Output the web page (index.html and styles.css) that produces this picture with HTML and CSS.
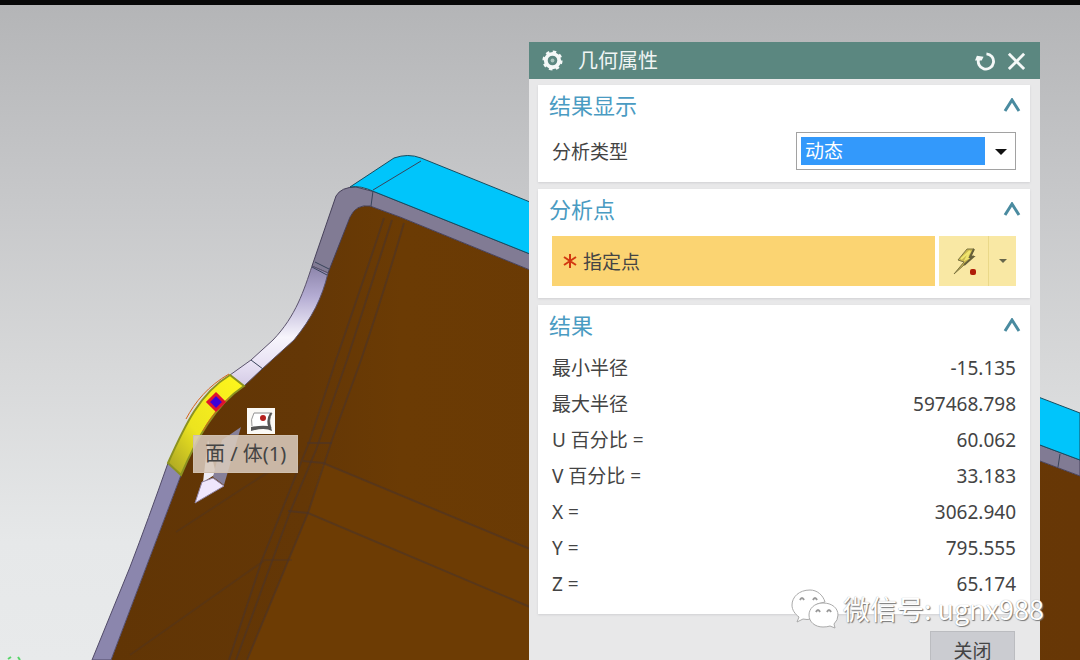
FILE: index.html
```html
<!DOCTYPE html>
<html lang="zh-CN">

<head>
    <meta charset="UTF-8">
    <meta name="viewport" content="width=device-width, initial-scale=1.0">
    <title>几何属性</title>
    <link rel="stylesheet" href="styles.css">
</head>

<body>
    <main class="workspace">
        <!-- Part model -->
        <svg class="model" viewBox="0 0 1080 660" preserveAspectRatio="xMidYMid slice" aria-hidden="true">
            <defs>
                <linearGradient id="brown" x1="0" y1="0" x2="1" y2="0">
                    <stop offset="0" stop-color="#613505" />
                    <stop offset="0.2" stop-color="#643706" />
                    <stop offset="0.3" stop-color="#6b3b04" />
                    <stop offset="1" stop-color="#673706" />
                </linearGradient>
                <linearGradient id="rim" gradientUnits="userSpaceOnUse" x1="0" y1="266" x2="0" y2="385">
                    <stop offset="0" stop-color="#8c84aa" />
                    <stop offset="0.25" stop-color="#b3abd2" />
                    <stop offset="0.6" stop-color="#f7f5fc" />
                    <stop offset="0.8" stop-color="#eae4f5" />
                    <stop offset="1" stop-color="#d5cce6" />
                </linearGradient>
                <linearGradient id="yellow" x1="1" y1="0" x2="0" y2="1">
                    <stop offset="0" stop-color="#fff71c" />
                    <stop offset="0.6" stop-color="#ece41f" />
                    <stop offset="1" stop-color="#a6a025" />
                </linearGradient>
            </defs>
            <path fill="url(#brown)" d="M111 660L181 475C196 440 212 408 242 385L262 369L290 340C308 318 318 298 324 276L350 217Q356 204 370 206L400 217L530 270L1080 476V660Z" />
            <path fill="#6d3c04" d="M323 463L530 549L540 660H247L308 513Z" />
            <g class="seams">
                <path d="M384 218Q362 285 336 360L310 440L262 560L229 660" />
                <path d="M404 223Q383 295 361 360L332 440L308 513L247 660" />
                <path d="M392 220Q370 288 347 360L316 450L290 512L236 660" />
                <path d="M307 443H332M303 461L323 463L530 549M288 511L308 513L530 607" />
                <path class="faint" d="M176 532L245 487L300 452M130 655L265 560H292" />
            </g>
            <path fill="#817b94" stroke="#47415a" d="M312 266L336 196Q341 187 356 187L375 192L530 254L1080 460V476L530 270L400 217L370 206Q356 204 350 217L328 273Z" />
            <path fill="#00c5fb" stroke="#164d60" d="M350 187L394 158Q408 153 421 158L530 202L1080 413V460L530 254L375 192Q360 185 350 187Z" />
            <path class="edge" d="M373 190L421 161M373 191L371 206M1060 454L1058 467" />
            <path fill="url(#rim)" stroke="#5b536c" d="M312 266C304 290 296 316 273 340L251 360L230 375L244 386L262 369L294 340C312 318 322 298 328 273Z" />
            <path class="edge" d="M251 360L263 369M315 262L329 269M312 267L327 275" />
            <path fill="#8b86ad" stroke="#514a68" d="M168 463Q148 520 130 567L92 660H111L181 475Z" />
            <path fill="url(#yellow)" stroke="#8c9221" stroke-width="2" d="M230 375C200 393 185 425 168 463L181 475C196 440 215 405 244 386Z" />
            <path fill="none" stroke="#d46519" d="M229 374C208 386 195 402 186 419M229 398C217 409 210 418 203 431" />
            <path fill="#3c00d8" stroke="#e0122e" stroke-width="3" d="M216 394L224 402L216 410L208 402Z" />
            <path fill="#eeecf5" d="M203 482L208 440L216 474L208 479Z" />
            <path fill="#868099" d="M241 427L222 440L213 477L224 485Z" />
            <path fill="#efe6fc" stroke="#9185a5" d="M195 503L202 482L213 478L224 486Z" />
            <path fill="none" stroke="#56d568" stroke-width="2" d="M8 659L11 657M18 657L20 660" />
        </svg>

        <svg class="pick-icon" viewBox="0 0 28 26" aria-hidden="true">
            <rect width="28" height="26" fill="#fbf9f5" />
            <path d="M7 5H25Q21 12 24 20H5" fill="#fff" stroke="#8c8c8c" />
            <path d="M25 5Q21 12 24 19L25 23Q18 19 4 23V19Q14 17 21 18Q19 11 23 5Z" fill="#555" />
            <path d="M7 5Q3 12 5 18" fill="none" stroke="#999" />
            <circle cx="16" cy="10" r="3" fill="#b5201d" />
        </svg>
        <div class="tooltip">面 / 体(1)</div>

        <!-- Geometry properties dialog -->
        <form class="dialog">
            <header class="title-bar">
                <svg class="gear" viewBox="0 0 24 24" aria-hidden="true">
                    <circle cx="12" cy="12" r="7" fill="none" stroke="#f4f8f7" stroke-width="4" />
                    <circle cx="12" cy="12" r="9" fill="none" stroke="#f4f8f7" stroke-width="3" stroke-dasharray="3.5 3.57" />
                    <circle cx="12" cy="12" r="2" fill="#a9c4bd" />
                </svg>
                <h1>几何属性</h1>
                <button type="button" class="icon-button" aria-label="重置">
                    <svg viewBox="0 0 22 22" aria-hidden="true">
                        <path d="M12 4A8 8 0 1 1 4 9" fill="none" stroke="#f4f8f7" stroke-width="3" />
                        <path d="M0 11L2 6L9 7L7 11Z" fill="#f4f8f7" />
                    </svg>
                </button>
                <button type="button" class="icon-button" aria-label="取消">
                    <svg viewBox="0 0 22 22" aria-hidden="true">
                        <path d="M3 4L19 20M19 4L3 20" stroke="#f4f8f7" stroke-width="3" />
                    </svg>
                </button>
            </header>

            <section class="group">
                <div class="group-header">
                    <h2>结果显示</h2>
                    <button type="button" class="collapse" aria-label="折叠结果显示">
                        <svg viewBox="0 0 18 14" aria-hidden="true"><path d="M2 13L9 2L16 13" /></svg>
                    </button>
                </div>
                <div class="field">
                    <label for="analysis-type">分析类型</label>
                    <div class="select-box">
                        <select id="analysis-type">
                            <option>动态</option>
                        </select>
                    </div>
                </div>
            </section>

            <section class="group">
                <div class="group-header">
                    <h2>分析点</h2>
                    <button type="button" class="collapse" aria-label="折叠分析点">
                        <svg viewBox="0 0 18 14" aria-hidden="true"><path d="M2 13L9 2L16 13" /></svg>
                    </button>
                </div>
                <div class="point-row">
                    <button type="button" class="specify">
                        <svg class="required" viewBox="0 0 14 14" aria-hidden="true">
                            <path d="M7 0V14M1 3L13 11M13 3L1 11" />
                        </svg>
                        指定点
                    </button>
                    <button type="button" class="point-tool" aria-label="点构造器">
                        <svg viewBox="0 0 28 32" aria-hidden="true">
                            <path d="M17 4H24L21 11H24L14 20L4 29L14 17L8 15Z" fill="#c9b84f" stroke="#7d7442" />
                            <path d="M11 14L20 6L16 14L20 12" fill="none" stroke="#f1e56e" stroke-width="2" />
                            <path d="M24 4L20 12L23 12L14 20" fill="none" stroke="#66603a" stroke-width="2" />
                            <rect x="20" y="24" width="6" height="6" rx="2" fill="#b01d08" />
                        </svg>
                    </button>
                    <button type="button" class="point-menu" aria-label="更多点选项"></button>
                </div>
            </section>

            <section class="group">
                <div class="group-header">
                    <h2>结果</h2>
                    <button type="button" class="collapse" aria-label="折叠结果">
                        <svg viewBox="0 0 18 14" aria-hidden="true"><path d="M2 13L9 2L16 13" /></svg>
                    </button>
                </div>
                <table class="results">
                    <tr><th scope="row">最小半径</th><td>-15.135</td></tr>
                    <tr><th scope="row">最大半径</th><td>597468.798</td></tr>
                    <tr><th scope="row">U 百分比 =</th><td>60.062</td></tr>
                    <tr><th scope="row">V 百分比 =</th><td>33.183</td></tr>
                    <tr><th scope="row">X =</th><td>3062.940</td></tr>
                    <tr><th scope="row">Y =</th><td>795.555</td></tr>
                    <tr><th scope="row">Z =</th><td>65.174</td></tr>
                </table>
            </section>

            <footer class="actions">
                <button type="button" class="close-button">关闭</button>
            </footer>
        </form>

        <div class="watermark">
            <svg viewBox="0 0 48 42" aria-hidden="true">
                <path d="M19 2C8 2 1 9 1 17C1 22 4 26 8 29L6 34L12 31Q16 32 20 31Q17 16 34 14C32 7 26 2 19 2Z" />
                <path d="M32 15C23 15 18 21 18 27C18 34 24 39 32 39Q36 39 39 38L44 40L43 36Q47 32 47 27C47 20 41 15 32 15Z" />
                <path class="eyes" d="M9 12Q11 8 13 12M22 12Q24 8 26 12M25 24Q27 20 29 24M36 24Q38 20 40 24" />
            </svg>
            <span>微信号: ugnx988</span>
        </div>
    </main>
</body>

</html>
```
FILE: styles.css
```css
/* General styles */
* {
    box-sizing: border-box;
}

body {
    font-family: "Noto Sans", "Noto Sans CJK SC", sans-serif;
    font-size: 19px;
    margin: 0;
    color: #444;
}

button,
select {
    font: inherit;
    color: inherit;
    border: none;
    padding: 0;
    cursor: pointer;
}

svg {
    display: block;
}

.workspace {
    position: relative;
    height: 100vh;
    overflow: hidden;
    border-top: 5px solid #080808;
    background: linear-gradient(#b4b5b7, #c7c8ca 30%, #d7d8d9 55%, #e6e8e9 82%, #e8eaeb);
}

/* Model */
.model {
    position: absolute;
    left: 0;
    bottom: 0;
    width: 100%;
    height: 100vh;
}

.seams path {
    fill: none;
    stroke: #4b3428;
    stroke-width: 2;
    stroke-opacity: 0.6;
}

.seams .faint {
    stroke-opacity: 0.35;
}

.edge {
    fill: none;
    stroke: #38445a;
}

.pick-icon {
    position: absolute;
    left: 247px;
    top: 403px;
    width: 28px;
    height: 26px;
}

.tooltip {
    position: absolute;
    left: 193px;
    top: 430px;
    padding: 0 11px;
    font-size: 20px;
    line-height: 36px;
    border: 1px solid #cfbfae;
    background: rgba(216, 202, 188, 0.88);
    white-space: nowrap;
}

/* Dialog */
.dialog {
    position: absolute;
    top: 37px;
    right: 40px;
    width: 511px;
    padding: 0 10px 12px 9px;
    background: #e8e8e9;
}

.title-bar {
    display: flex;
    align-items: center;
    gap: 10px;
    height: 37px;
    margin: 0 -10px 6px -9px;
    padding: 0 13px 0 12px;
    background: #5b8780;
    color: #f0f5f4;
}

.title-bar h1 {
    flex: 1;
    margin: 0 0 0 4px;
    font-size: 20px;
    line-height: 36px;
    font-weight: 400;
}

.gear {
    width: 23px;
    height: 23px;
}

.icon-button {
    background: none;
}

.icon-button svg {
    width: 21px;
    height: 21px;
}

.group {
    margin-bottom: 7px;
    padding: 0 14px 12px;
    background: #fff;
    box-shadow: 0 1px 2px #d0d0d4;
}

.group-header {
    display: flex;
    align-items: center;
    justify-content: space-between;
    height: 40px;
    margin: 0 -5px 7px -3px;
}

.group-header h2 {
    margin: 0;
    font-size: 22px;
    line-height: 40px;
    font-weight: 400;
    color: #4a9bc2;
}

.collapse {
    background: none;
}

.collapse svg {
    width: 18px;
    height: 14px;
    fill: none;
    stroke: #4a8ba0;
    stroke-width: 3;
}

.field {
    display: flex;
    align-items: center;
    justify-content: space-between;
}

.select-box {
    position: relative;
    width: 220px;
}

.select-box select {
    appearance: none;
    display: block;
    width: 100%;
    height: 38px;
    padding: 4px 30px 4px 4px;
    border: 1px solid #a2a2a2;
    border-radius: 0;
    background: #3399fb content-box;
    color: #fff;
    text-indent: 4px;
}

.select-box::after,
.point-menu::after {
    content: "";
    border: 6px solid transparent;
    border-top-color: #111;
    border-bottom: none;
}

.select-box::after {
    position: absolute;
    right: 9px;
    top: 17px;
    pointer-events: none;
}

.point-row {
    display: flex;
    height: 50px;
}

.specify {
    flex: 1;
    display: flex;
    align-items: center;
    gap: 6px;
    padding-left: 11px;
    margin-right: 4px;
    background: #fbd472;
}

.required {
    width: 14px;
    height: 14px;
    fill: none;
    stroke: #d23810;
    stroke-width: 2;
}

.point-tool,
.point-menu {
    display: flex;
    align-items: center;
    justify-content: center;
    background: #f9e8a4;
}

.point-tool {
    width: 49px;
}

.point-tool svg {
    width: 28px;
    height: 32px;
}

.point-menu {
    width: 28px;
    border-left: 1px solid #ead889;
}

.point-menu::after {
    border-width: 4px;
    border-top-color: #67664b;
    border-bottom: none;
}

/* Results */
.results {
    width: 100%;
    margin-top: -2px;
    border-collapse: collapse;
}

.results th,
.results td {
    height: 36px;
    padding: 0;
    line-height: 36px;
    font-weight: 400;
    text-align: left;
}

.results td {
    text-align: right;
}

.actions {
    display: flex;
    justify-content: flex-end;
    padding: 10px 15px 0;
}

.close-button {
    width: 85px;
    height: 38px;
    border: 1px solid #bbbcc0;
    background: #cbccd1;
}

/* Watermark */
.watermark {
    position: absolute;
    right: 36px;
    bottom: 30px;
    display: flex;
    align-items: center;
    gap: 4px;
    color: #fff;
    font-family: "Noto Sans CJK SC", sans-serif;
    font-size: 27px;
    line-height: 42px;
    text-shadow: 1px 1px 1px #777, 0 0 1px #999;
}

.watermark svg {
    width: 48px;
    height: 42px;
    fill: #fff;
    stroke: #aaa;
}

.watermark .eyes {
    fill: none;
    stroke: #999;
    stroke-width: 2;
}
```
